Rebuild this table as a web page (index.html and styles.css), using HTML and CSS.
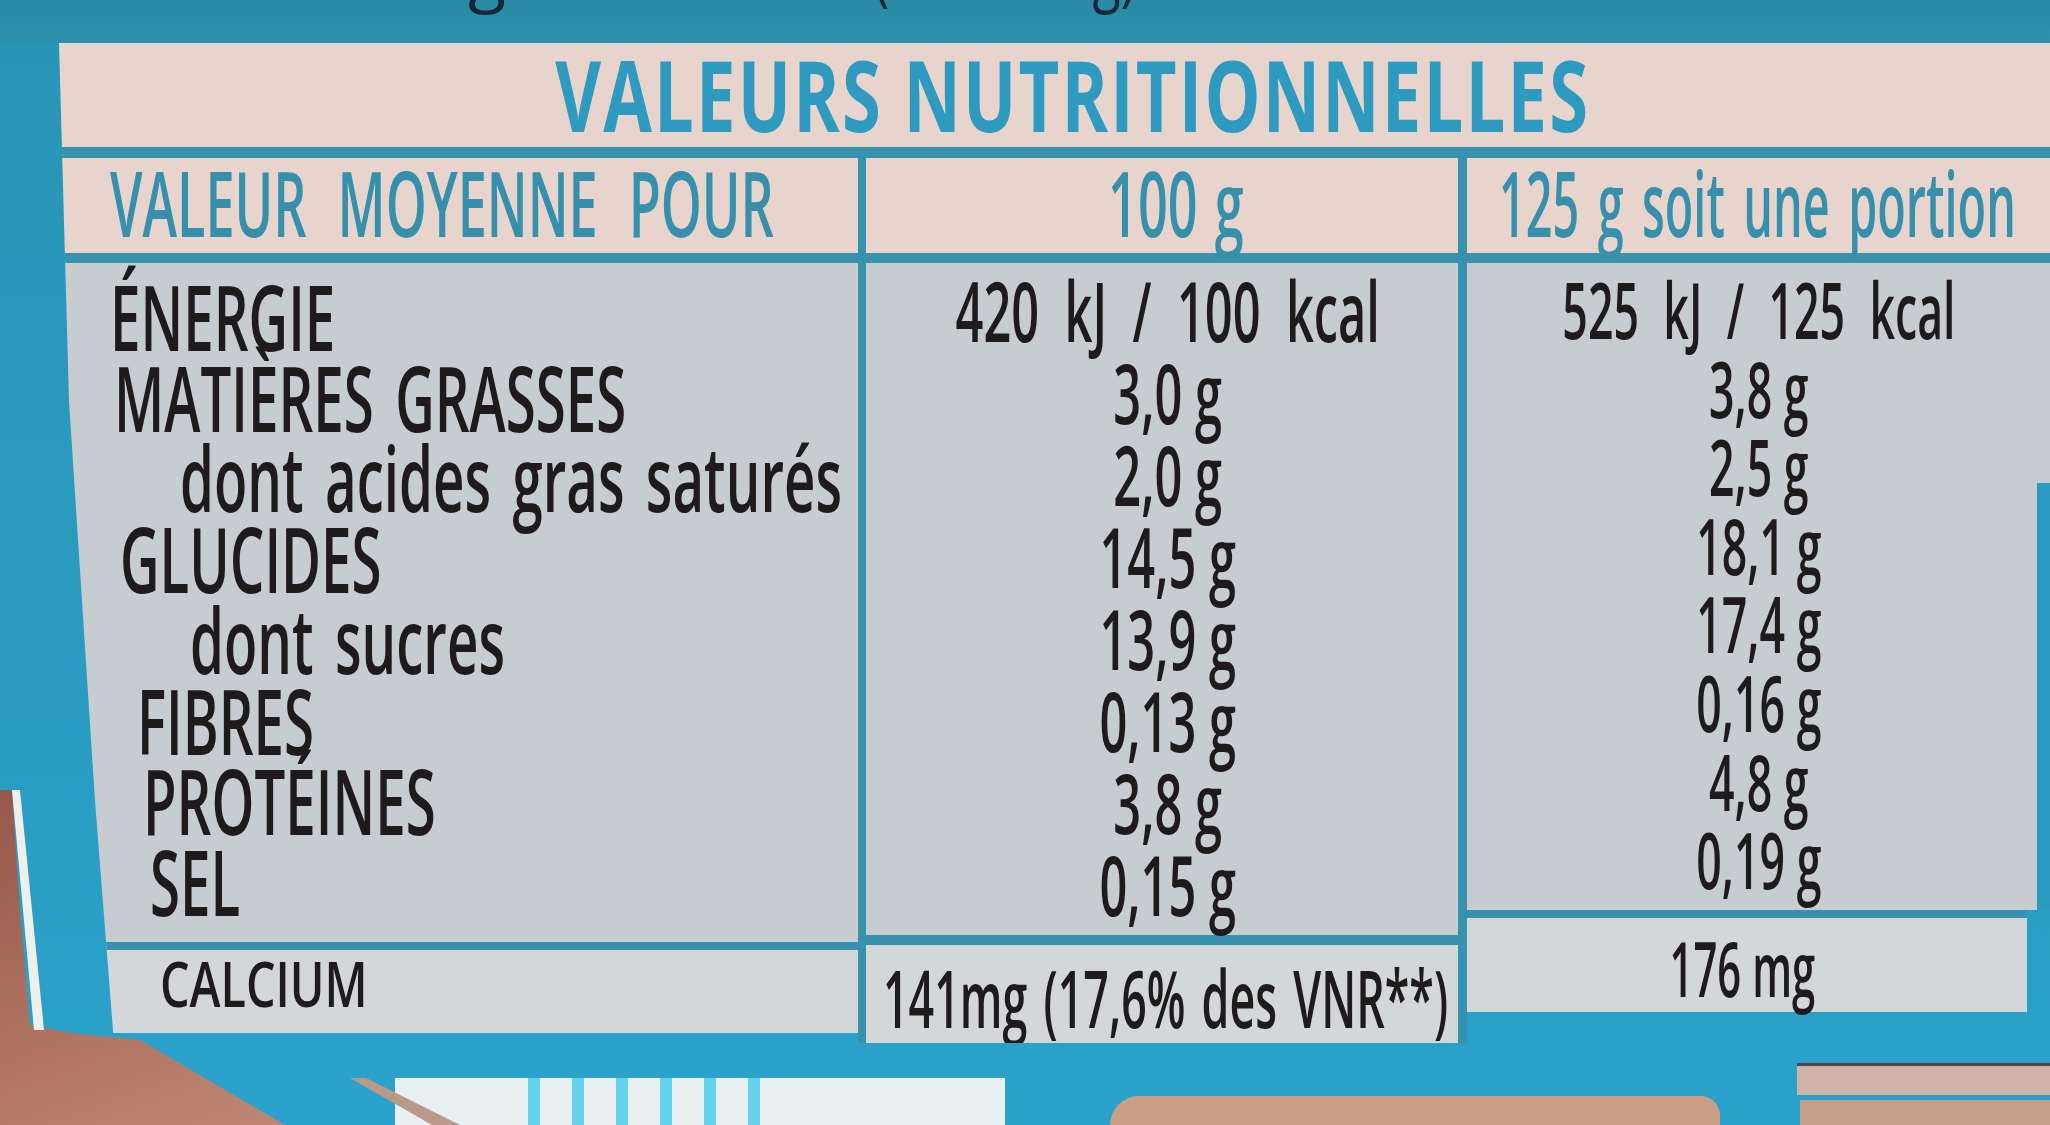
FILE: index.html
```html
<!DOCTYPE html>
<html lang="fr">
<head>
<meta charset="utf-8">
<title>Valeurs nutritionnelles</title>
<link rel="stylesheet" href="styles.css">
</head>
<body>
<div class="photo">
  <div class="top-band">
    <span class="top-a">Poids net : 4 x 125 g</span>
    <span class="top-b">(soit 500 g)</span>
  </div>
  <div class="label">
    <div class="title-row"><span class="t">VALEURS NUTRITIONNELLES</span></div>
    <div class="head-row">
      <div class="hc hc1"><span class="t">VALEUR MOYENNE POUR</span></div>
      <div class="hc hc2"><span class="t">100 g</span></div>
      <div class="hc hc3"><span class="t">125 g soit une portion</span></div>
    </div>
    <div class="grid">
      <div class="col col1">
        <div class="body">
          <div class="ln i1"><span class="t">ÉNERGIE</span></div>
          <div class="ln i2"><span class="t">MATIÈRES GRASSES</span></div>
          <div class="ln i3"><span class="t">dont acides gras saturés</span></div>
          <div class="ln i4"><span class="t">GLUCIDES</span></div>
          <div class="ln i5"><span class="t">dont sucres</span></div>
          <div class="ln i6"><span class="t">FIBRES</span></div>
          <div class="ln i7"><span class="t">PROTÉINES</span></div>
          <div class="ln i8"><span class="t">SEL</span></div>
        </div>
        <div class="extra"><span class="t">CALCIUM</span></div>
      </div>
      <div class="col col2">
        <div class="body">
          <div class="ln"><span class="t wide">420 kJ / 100 kcal</span></div>
          <div class="ln"><span class="t">3,0 g</span></div>
          <div class="ln"><span class="t">2,0 g</span></div>
          <div class="ln"><span class="t">14,5 g</span></div>
          <div class="ln"><span class="t">13,9 g</span></div>
          <div class="ln"><span class="t">0,13 g</span></div>
          <div class="ln"><span class="t">3,8 g</span></div>
          <div class="ln"><span class="t">0,15 g</span></div>
        </div>
        <div class="extra"><span class="t">141mg (17,6% des VNR**)</span></div>
      </div>
      <div class="col col3">
        <div class="body">
          <div class="ln"><span class="t wide">525 kJ / 125 kcal</span></div>
          <div class="ln"><span class="t">3,8 g</span></div>
          <div class="ln"><span class="t">2,5 g</span></div>
          <div class="ln"><span class="t">18,1 g</span></div>
          <div class="ln"><span class="t">17,4 g</span></div>
          <div class="ln"><span class="t">0,16 g</span></div>
          <div class="ln"><span class="t">4,8 g</span></div>
          <div class="ln"><span class="t">0,19 g</span></div>
        </div>
        <div class="extra"><span class="t">176 mg</span></div>
      </div>
    </div>
  </div>
  <div class="finger"></div>
  <div class="torn"></div>
  <div class="pack-patch"></div>
  <div class="crease"></div>
  <div class="tan-bottom"></div>
  <div class="beige-strip"></div>
  <div class="tan-right"></div>
</div>
</body>
</html>
```

FILE: styles.css
```css
* { box-sizing: border-box; }

html, body { margin: 0; padding: 0; }

body {
  width: 2050px;
  height: 1125px;
  overflow: hidden;
  background: linear-gradient(to bottom, #2a94b5 0, #2a9bc0 55%, #2aa2cb 100%);
  font-family: "Open Sans", "Liberation Sans", sans-serif;
  color: #1f1b1d;
}

.photo {
  position: relative;
  width: 2050px;
  height: 1125px;
  display: flex;
  flex-direction: column;
}

/* ---- top band with cut-off line of text (only descenders show) ---- */
.top-band {
  height: 43px;
  flex-shrink: 0;
  background: linear-gradient(to bottom, #2a89a3, #2b92ad);
  display: flex;
  overflow: hidden;
  color: #15283a;
  font-size: 70px;
  line-height: 62px;
  font-weight: 400;
}
.top-a {
  width: 506px;
  flex-shrink: 0;
  display: flex;
  justify-content: flex-end;
  margin-top: -60px;
  white-space: pre;
}
.top-b {
  margin-left: 368px;
  margin-top: -60px;
  white-space: pre;
  transform: scaleX(.74);
  transform-origin: 0 50%;
}

/* ---- the label ---- */
.label {
  margin-left: 55px;
  width: 1995px;
  flex-shrink: 0;
  clip-path: polygon(4px 0, 100% 0, 100% 100%, 59px 100%, 40px 758px, 14px 358px);
}

.t {
  display: inline-block;
  white-space: pre;
  transform: scaleX(var(--sx, .6));
  transform-origin: 0 50%;
}

.title-row {
  height: 104px;
  background: #e7d4cc;
  display: flex;
  justify-content: center;
  padding-left: 41px;
  color: #2f9ac0;
  font-size: 98px;
  line-height: 102px;
  font-weight: 700;
}
.title-row .t {
  --sx: .72;
  letter-spacing: 3px;
  transform-origin: 50% 50%;
}

.head-row {
  display: flex;
  height: 116px;
  border-top: 11px solid #3792ae;
  border-bottom: 10px solid #3792ae;
  background: #e7d4cc;
  color: #3790ab;
  font-size: 90px;
  line-height: 88px;
  font-weight: 600;
}
.hc { display: flex; flex-shrink: 0; min-width: 0; }
.hc .t { --sx: .58; word-spacing: 30px; }
.hc1 { width: 803px; padding-left: 55px; }
.hc2 {
  width: 609px;
  border-left: 8px solid #3792ae;
  border-right: 9px solid #3792ae;
  justify-content: center;
  padding-left: 27px;
}
.hc2 .t { transform-origin: 50% 50%; word-spacing: 6px; }
.hc3 { flex: 1 1 0; padding-left: 32px; }
.hc3 .t { --sx: .52; word-spacing: 12px; }

/* ---- body grid ---- */
.grid {
  display: flex;
  align-items: flex-start;
  font-weight: 600;
}
.col { flex-shrink: 0; min-width: 0; }
.col1 { width: 803px; }
.col2 {
  width: 609px;
  border-left: 8px solid #3792ae;
  border-right: 9px solid #3792ae;
}
.col3 { flex: 1 1 0; }

.body { background: #c6ccd0; }
.extra { background: #d4d7d9; display: flex; }

.ln { display: flex; }

.col1 .body {
  height: 679px;
  padding-top: 13px;
  font-size: 91px;
  line-height: 80.7px;
}
.col1 .body .t { word-spacing: 12px; }
.col1 .extra {
  height: 91px;
  border-top: 8px solid #3792ae;
  font-size: 64px;
  line-height: 66px;
  padding-left: 105px;
}
.col1 .extra .t { --sx: .73; }

.i1 { padding-left: 55px; }
.i2 { padding-left: 59px; }
.i3 { padding-left: 125px; }
.i4 { padding-left: 65px; }
.i5 { padding-left: 135px; }
.i6 { padding-left: 82px; }
.i7 { padding-left: 88px; }
.i8 { padding-left: 95px; }

.col2 .body {
  height: 672px;
  padding-top: 6px;
  font-size: 84px;
  line-height: 82px;
}
.col2 .ln { justify-content: center; padding-left: 12px; }
.col2 .extra {
  height: 108px;
  border-top: 10px solid #3792ae;
  font-size: 80px;
  line-height: 104px;
  justify-content: center;
  padding-left: 8px;
}
.col2 .extra .t { --sx: .56; word-spacing: 8px; }

.col3 .body {
  height: 647px;
  padding-top: 8px;
  font-size: 77px;
  line-height: 78.6px;
  background:
    linear-gradient(90deg, transparent calc(100% - 13px), #2a9cc2 0) 0 220px / 100% 100% no-repeat,
    #c6ccd0;
}
.col3 .ln { justify-content: center; }
.col3 .extra {
  height: 102px;
  margin-right: 23px;
  border-top: 8px solid #3792ae;
  font-size: 76px;
  line-height: 99px;
  justify-content: center;
  padding-right: 10px;
}
.col3 .extra .t { --sx: .55; }

.col2 .t, .col3 .t { --sx: .58; transform-origin: 50% 50%; }
.col2 .t.wide, .col3 .t.wide { word-spacing: 22px; }

/* ---- photo background elements around the pack ---- */
.finger {
  position: absolute;
  left: 0;
  top: 790px;
  width: 300px;
  height: 335px;
  background: linear-gradient(160deg, #95584b 0%, #a86d5b 45%, #bf8773 100%);
  clip-path: polygon(0 0, 12px 0, 20px 120px, 30px 235px, 70px 243px, 140px 250px, 285px 335px, 0 335px);
}
.torn {
  position: absolute;
  left: 0;
  top: 790px;
  width: 60px;
  height: 245px;
  background: #eef0ee;
  clip-path: polygon(12px 0, 20px 0, 44px 240px, 34px 240px);
}
.pack-patch {
  position: absolute;
  left: 395px;
  top: 1078px;
  width: 610px;
  height: 47px;
  background:
    repeating-linear-gradient(90deg, transparent 0 18px, #63d2ea 18px 30px, transparent 30px 44px) 115px 0 / 255px 100% no-repeat,
    #e8f0f2;
}
.crease {
  position: absolute;
  left: 350px;
  top: 1078px;
  width: 110px;
  height: 47px;
  background: #b9998a;
  clip-path: polygon(0 0, 16px 0, 100% 100%, 82px 100%);
}
.tan-bottom {
  position: absolute;
  left: 1110px;
  top: 1096px;
  width: 610px;
  height: 29px;
  background: #c99f86;
  border-radius: 60px 40px 0 0;
}
.beige-strip {
  position: absolute;
  left: 1797px;
  top: 1063px;
  width: 253px;
  height: 32px;
  background: #cfb3a7;
  border-top: 3px solid #4f4446;
}
.tan-right {
  position: absolute;
  left: 1800px;
  top: 1100px;
  width: 250px;
  height: 25px;
  background: #c7a089;
}
```
